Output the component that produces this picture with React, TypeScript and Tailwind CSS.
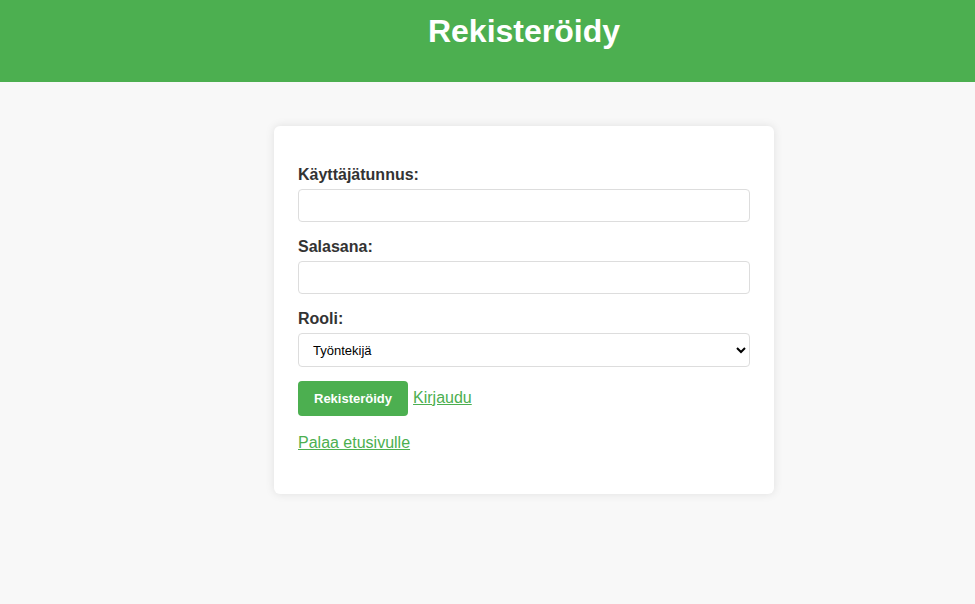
import React from "react";

export default function App() {
  const font = { fontFamily: '"Liberation Sans", Arial, sans-serif' };
  return (
    <div className="min-h-[604px] bg-[#f8f8f8]" style={font}>
      <header className="h-[82px] bg-[#4CAF50] pl-[73px] pt-[13px]">
        <h1 className="text-center text-[32px] leading-[37px] font-bold text-white">Rekisteröidy</h1>
      </header>
      <main className="pl-[73px] pt-[44px] flex justify-center">
        <div className="w-[500px] bg-white rounded-[6px] shadow-[0_0_10px_rgba(0,0,0,0.1)] px-[24px] pt-[40px] pb-[42px]">
          <label className="block text-[16px] leading-[18px] font-bold text-[#333]">Käyttäjätunnus:</label>
          <input type="text" className="block mt-[5px] w-full h-[33px] border border-[#ddd] rounded-[4px] bg-white px-2" />
          <label className="block mt-[16px] text-[16px] leading-[18px] font-bold text-[#333]">Salasana:</label>
          <input type="password" className="block mt-[5px] w-full h-[33px] border border-[#ddd] rounded-[4px] bg-white px-2" />
          <label className="block mt-[16px] text-[16px] leading-[18px] font-bold text-[#333]">Rooli:</label>
          <select className="block mt-[5px] w-full h-[34px] border border-[#ddd] rounded-[4px] bg-white pl-[10px] pr-[6px] text-[13px] text-black" defaultValue="tyontekija">
            <option value="tyontekija">Työntekijä</option>
            <option value="esimies">Esimies</option>
          </select>
          <div className="mt-[14px] flex items-baseline">
            <button className="bg-[#4CAF50] text-white font-bold text-[13px] leading-[15px] py-[10px] px-[16px] rounded-[4px]">Rekisteröidy</button>
            <a href="#" className="ml-[5px] text-[16px] text-[#4CAF50] underline">Kirjaudu</a>
          </div>
          <div className="mt-[18px] leading-[18px]">
            <a href="#" className="text-[16px] text-[#4CAF50] underline">Palaa etusivulle</a>
          </div>
        </div>
      </main>
    </div>
  );
}
